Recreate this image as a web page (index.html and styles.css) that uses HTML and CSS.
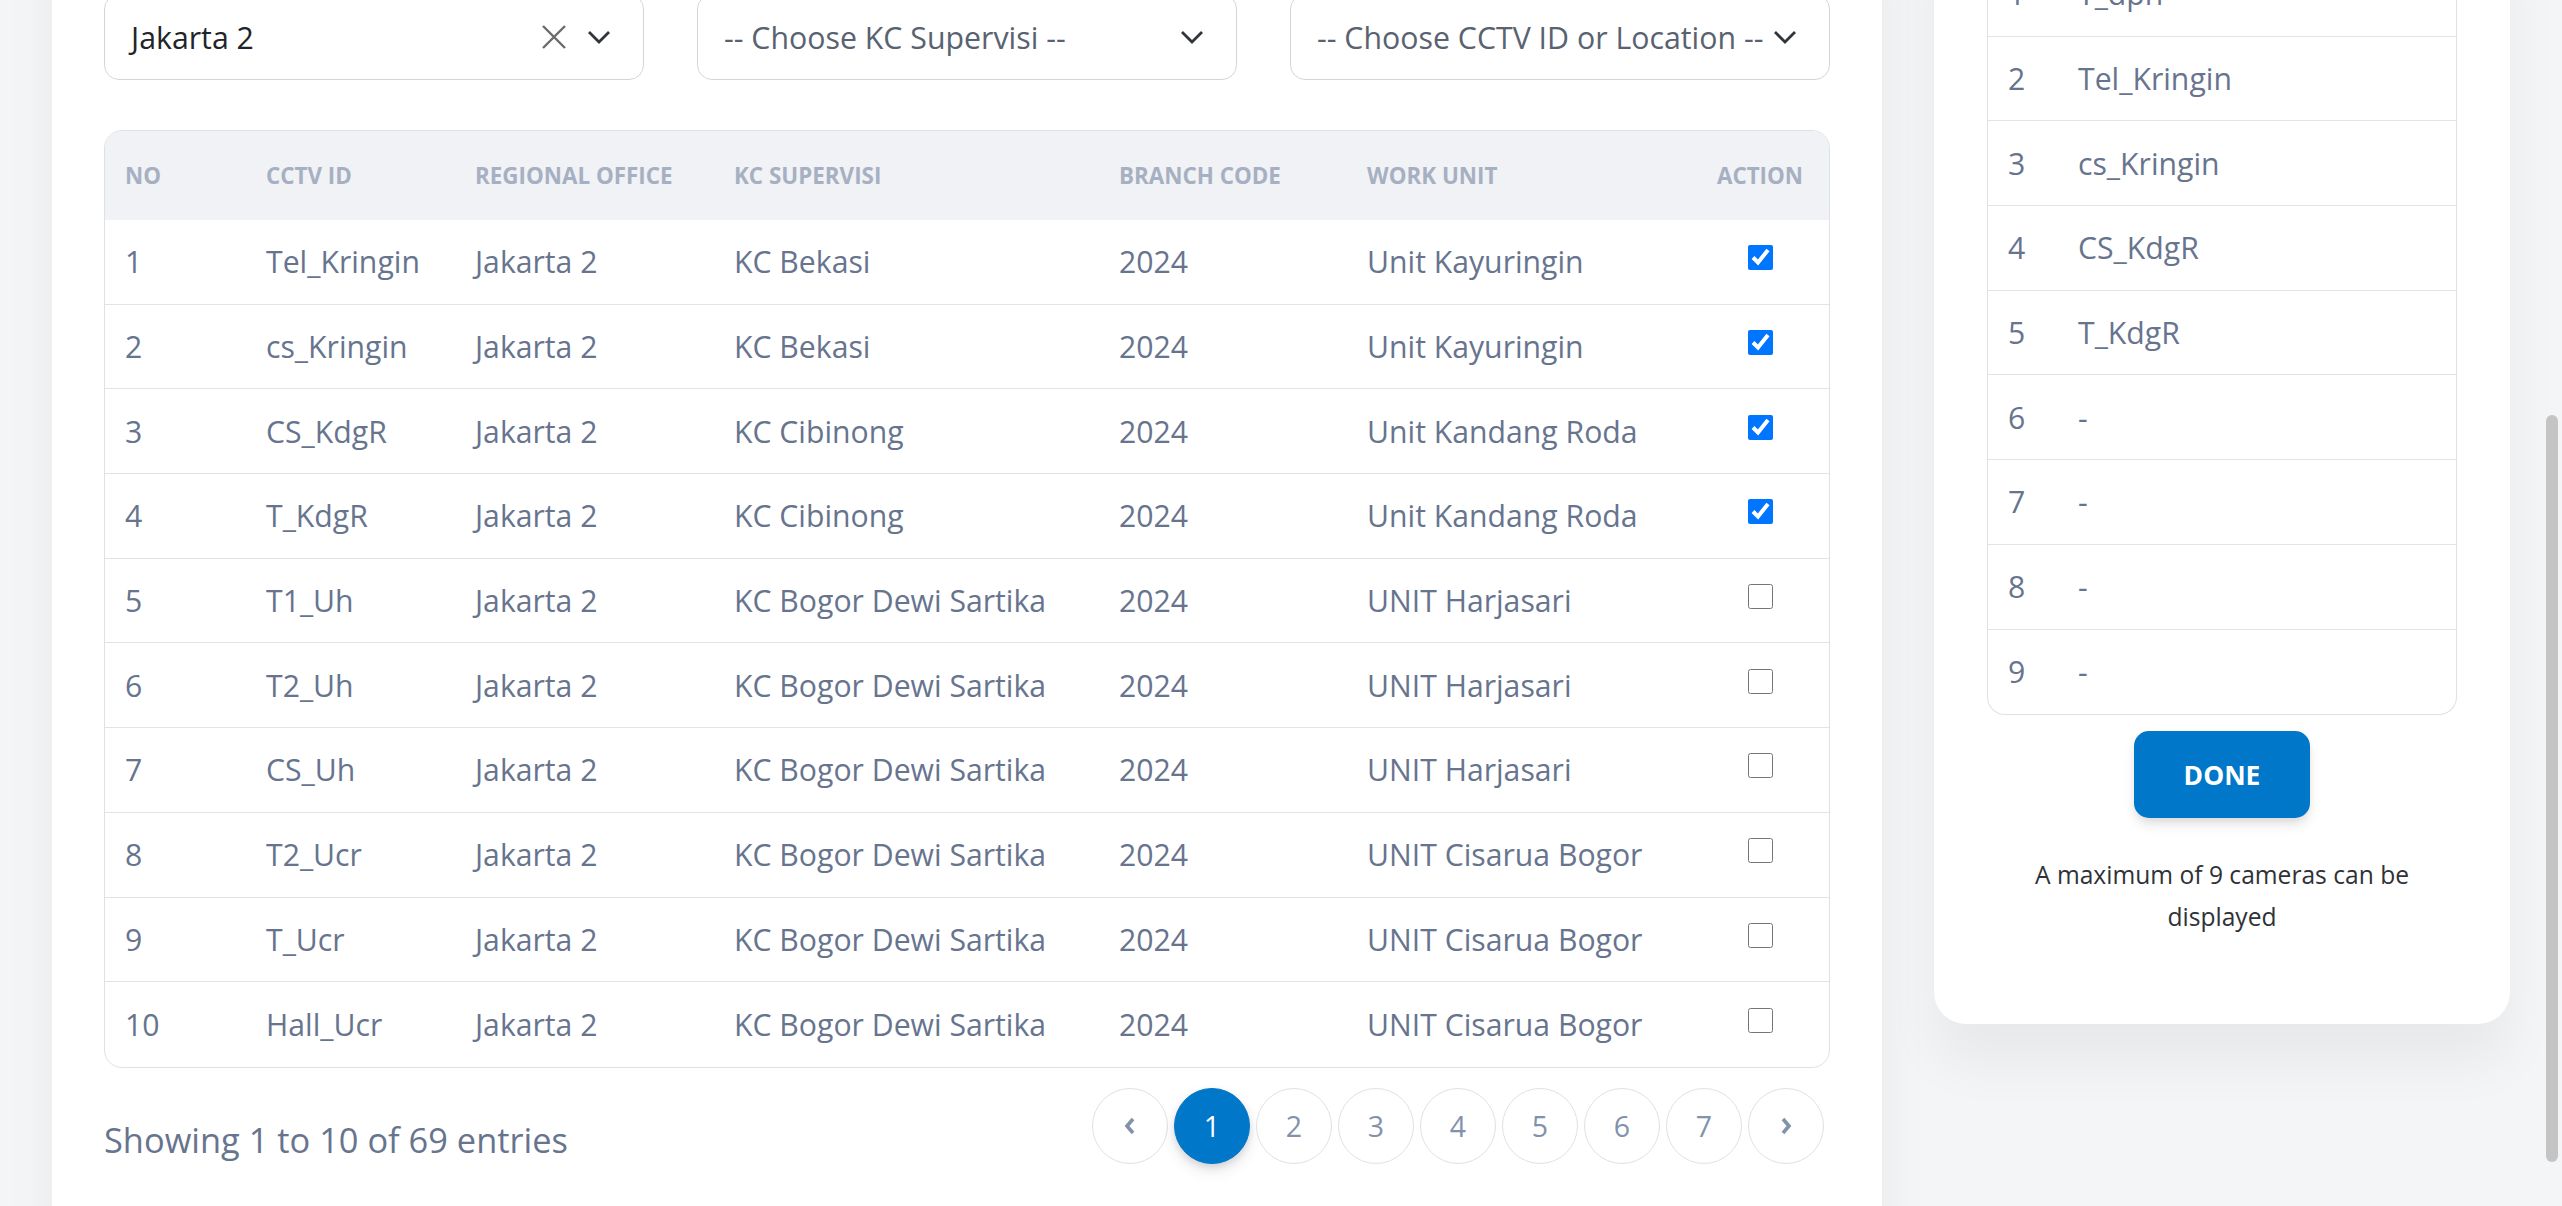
FILE: index.html
```html
<!DOCTYPE html>
<html lang="en">
<head>
<meta charset="utf-8">
<title>CCTV Selection</title>
<link rel="stylesheet" href="styles.css">
</head>
<body>
<div class="page">
  <main class="card main-card">
    <div class="filters">
      <div class="select">
        <span class="select-value">Jakarta 2</span>
        <span class="select-icons">
          <svg class="icon-x" width="26" height="26" viewBox="0 0 26 26"><path d="M2 2 L24 24 M24 2 L2 24" stroke="#6b6b6b" stroke-width="2.4" fill="none"/></svg>
          <svg class="icon-chev" width="24" height="14" viewBox="0 0 24 14"><path d="M2 2 L12 12 L22 2" stroke="#30353b" stroke-width="2.8" fill="none"/></svg>
        </span>
      </div>
      <div class="select">
        <span class="select-placeholder">-- Choose KC Supervisi --</span>
        <span class="select-icons">
          <svg class="icon-chev" width="24" height="14" viewBox="0 0 24 14"><path d="M2 2 L12 12 L22 2" stroke="#30353b" stroke-width="2.8" fill="none"/></svg>
        </span>
      </div>
      <div class="select">
        <span class="select-placeholder">-- Choose CCTV ID or Location --</span>
        <span class="select-icons">
          <svg class="icon-chev" width="24" height="14" viewBox="0 0 24 14"><path d="M2 2 L12 12 L22 2" stroke="#30353b" stroke-width="2.8" fill="none"/></svg>
        </span>
      </div>
    </div>

    <div class="table-wrap">
      <table class="cctv-table">
        <colgroup>
          <col class="c-no"><col class="c-id"><col class="c-reg"><col class="c-kc"><col class="c-branch"><col class="c-unit"><col class="c-action">
        </colgroup>
        <thead>
          <tr><th>No</th><th>CCTV ID</th><th>Regional Office</th><th>KC Supervisi</th><th>Branch Code</th><th>Work Unit</th><th class="action">Action</th></tr>
        </thead>
        <tbody>
          <tr><td>1</td><td>Tel_Kringin</td><td>Jakarta 2</td><td>KC Bekasi</td><td>2024</td><td>Unit Kayuringin</td><td class="action"><input type="checkbox" checked></td></tr>
          <tr><td>2</td><td>cs_Kringin</td><td>Jakarta 2</td><td>KC Bekasi</td><td>2024</td><td>Unit Kayuringin</td><td class="action"><input type="checkbox" checked></td></tr>
          <tr><td>3</td><td>CS_KdgR</td><td>Jakarta 2</td><td>KC Cibinong</td><td>2024</td><td>Unit Kandang Roda</td><td class="action"><input type="checkbox" checked></td></tr>
          <tr><td>4</td><td>T_KdgR</td><td>Jakarta 2</td><td>KC Cibinong</td><td>2024</td><td>Unit Kandang Roda</td><td class="action"><input type="checkbox" checked></td></tr>
          <tr><td>5</td><td>T1_Uh</td><td>Jakarta 2</td><td>KC Bogor Dewi Sartika</td><td>2024</td><td>UNIT Harjasari</td><td class="action"><input type="checkbox"></td></tr>
          <tr><td>6</td><td>T2_Uh</td><td>Jakarta 2</td><td>KC Bogor Dewi Sartika</td><td>2024</td><td>UNIT Harjasari</td><td class="action"><input type="checkbox"></td></tr>
          <tr><td>7</td><td>CS_Uh</td><td>Jakarta 2</td><td>KC Bogor Dewi Sartika</td><td>2024</td><td>UNIT Harjasari</td><td class="action"><input type="checkbox"></td></tr>
          <tr><td>8</td><td>T2_Ucr</td><td>Jakarta 2</td><td>KC Bogor Dewi Sartika</td><td>2024</td><td>UNIT Cisarua Bogor</td><td class="action"><input type="checkbox"></td></tr>
          <tr><td>9</td><td>T_Ucr</td><td>Jakarta 2</td><td>KC Bogor Dewi Sartika</td><td>2024</td><td>UNIT Cisarua Bogor</td><td class="action"><input type="checkbox"></td></tr>
          <tr><td>10</td><td>Hall_Ucr</td><td>Jakarta 2</td><td>KC Bogor Dewi Sartika</td><td>2024</td><td>UNIT Cisarua Bogor</td><td class="action"><input type="checkbox"></td></tr>
        </tbody>
      </table>
    </div>

    <div class="table-footer">
      <span class="showing">Showing 1 to 10 of 69 entries</span>
      <nav class="pagination">
        <a class="page-link">
          <svg width="12" height="18" viewBox="0 0 12 18"><path d="M9 2 L3 9 L9 16" stroke="#8392ab" stroke-width="3.6" fill="none"/></svg>
        </a>
        <a class="page-link active">1</a>
        <a class="page-link">2</a>
        <a class="page-link">3</a>
        <a class="page-link">4</a>
        <a class="page-link">5</a>
        <a class="page-link">6</a>
        <a class="page-link">7</a>
        <a class="page-link">
          <svg width="12" height="18" viewBox="0 0 12 18"><path d="M3 2 L9 9 L3 16" stroke="#8392ab" stroke-width="3.6" fill="none"/></svg>
        </a>
      </nav>
    </div>
  </main>

  <aside class="card side-card">
    <div class="slot-table">
      <div class="slot-row"><span class="slot-no">1</span><span class="slot-name">T_dpn</span></div>
      <div class="slot-row"><span class="slot-no">2</span><span class="slot-name">Tel_Kringin</span></div>
      <div class="slot-row"><span class="slot-no">3</span><span class="slot-name">cs_Kringin</span></div>
      <div class="slot-row"><span class="slot-no">4</span><span class="slot-name">CS_KdgR</span></div>
      <div class="slot-row"><span class="slot-no">5</span><span class="slot-name">T_KdgR</span></div>
      <div class="slot-row"><span class="slot-no">6</span><span class="slot-name">-</span></div>
      <div class="slot-row"><span class="slot-no">7</span><span class="slot-name">-</span></div>
      <div class="slot-row"><span class="slot-no">8</span><span class="slot-name">-</span></div>
      <div class="slot-row"><span class="slot-no">9</span><span class="slot-name">-</span></div>
    </div>
    <button class="btn-done">DONE</button>
    <p class="note">A maximum of 9 cameras can be displayed</p>
  </aside>
</div>
<div class="scroll-thumb"></div>
</body>
</html>
```

FILE: styles.css
```css
* { box-sizing: border-box; }

html, body {
  margin: 0;
  height: 100%;
  overflow: hidden;
}

body {
  background: #f4f5f7;
  font-family: "Open Sans", "Noto Sans", sans-serif;
  color: #67748e;
}

.page {
  display: flex;
  align-items: flex-start;
  gap: 52px;
  padding: 0 52px;
  margin-top: -100px;
}

.card {
  background: #fff;
  border-radius: 32px;
  box-shadow: 0 40px 54px 0 rgba(0, 0, 0, 0.05);
}

.main-card {
  width: 1830px;
  flex: none;
  padding: 94px 52px 80px;
}

.filters {
  display: grid;
  grid-template-columns: repeat(3, 540px);
  gap: 53px;
}

.select {
  height: 86px;
  border: 1.5px solid #d2d6da;
  border-radius: 15px;
  padding: 0 32px 0 26px;
  display: flex;
  align-items: center;
  justify-content: space-between;
  font-size: 30.3px;
  background: #fff;
}

.select-value { color: #212529; }
.select-placeholder { color: #596270; white-space: nowrap; }

.select-icons {
  display: flex;
  align-items: center;
  gap: 20px;
}

.icon-x { display: block; }
.icon-chev { display: block; }

.table-wrap {
  margin-top: 50px;
  border: 1.5px solid #dee2e6;
  border-radius: 18px;
  overflow: hidden;
}

.cctv-table {
  width: 100%;
  table-layout: fixed;
  border-collapse: separate;
  border-spacing: 0;
}

.c-no { width: 141px; }
.c-id { width: 209px; }
.c-reg { width: 259px; }
.c-kc { width: 385px; }
.c-branch { width: 248px; }
.c-unit { width: 352px; }
.c-action { width: 130px; }

.cctv-table th {
  height: 89px;
  background: #f0f2f5;
  text-align: left;
  padding: 0 20px;
  font-size: 22.4px;
  font-weight: 700;
  text-transform: uppercase;
  color: #a6b0c2;
  white-space: nowrap;
}

.cctv-table td {
  height: 84.7px;
  padding: 0 20px;
  font-size: 30.2px;
  color: #67748e;
  border-bottom: 1.5px solid #e0e4e9;
  white-space: nowrap;
}

.cctv-table tbody tr:last-child td { border-bottom: none; }

.cctv-table th.action {
  text-align: center;
  padding: 0 8px 0 0;
}

.cctv-table td.action {
  text-align: center;
  padding: 0 8px 8px 0;
}

.cctv-table input[type="checkbox"] {
  display: block;
  width: 25px;
  height: 25px;
  margin: 0 auto;
}

.table-footer {
  display: flex;
  justify-content: space-between;
  align-items: flex-end;
  margin-top: 20px;
  padding-right: 6px;
}

.showing {
  font-size: 34.4px;
  line-height: 1.4;
  color: #67748e;
}

.pagination {
  display: flex;
  gap: 6px;
}

.page-link {
  width: 76px;
  height: 76px;
  border-radius: 50%;
  border: 1.5px solid #dee2e6;
  display: flex;
  align-items: center;
  justify-content: center;
  font-size: 28.5px;
  color: #8392ab;
  background: #fff;
}

.page-link.active {
  background: #0077c8;
  border-color: #0077c8;
  color: #fff;
  box-shadow: 0 7px 14px rgba(50, 50, 93, 0.12), 0 3px 6px rgba(0, 0, 0, 0.1);
}

.side-card {
  width: 576px;
  flex: none;
  padding: 52px 53px 87px;
  display: flex;
  flex-direction: column;
  align-items: center;
}

.slot-table {
  width: 100%;
  border: 1.5px solid #dee2e6;
  border-top: none;
  border-radius: 0 0 18px 18px;
}

.slot-row {
  height: 84.7px;
  display: flex;
  align-items: center;
  padding: 0 20px;
  font-size: 30.2px;
  color: #67748e;
  border-bottom: 1.5px solid #e0e4e9;
}

.slot-row:last-child { border-bottom: none; }

.slot-no { width: 70px; flex: none; }

.btn-done {
  margin-top: 16px;
  width: 176px;
  height: 87px;
  border: none;
  border-radius: 15px;
  background: #0077c8;
  color: #fff;
  font-family: "Open Sans", "Noto Sans", sans-serif;
  font-size: 26.4px;
  font-weight: 700;
  box-shadow: 0 8px 14px -2px rgba(0, 0, 0, 0.11), 0 4px 8px -2px rgba(0, 0, 0, 0.07);
}

.note {
  margin: 36px 0 0;
  width: 420px;
  text-align: center;
  font-size: 24.6px;
  line-height: 41.6px;
  color: #2f3237;
}

.scroll-thumb {
  position: fixed;
  top: 415px;
  right: 4px;
  width: 12px;
  height: 747px;
  border-radius: 6px;
  background: #c4c4c4;
}
```
